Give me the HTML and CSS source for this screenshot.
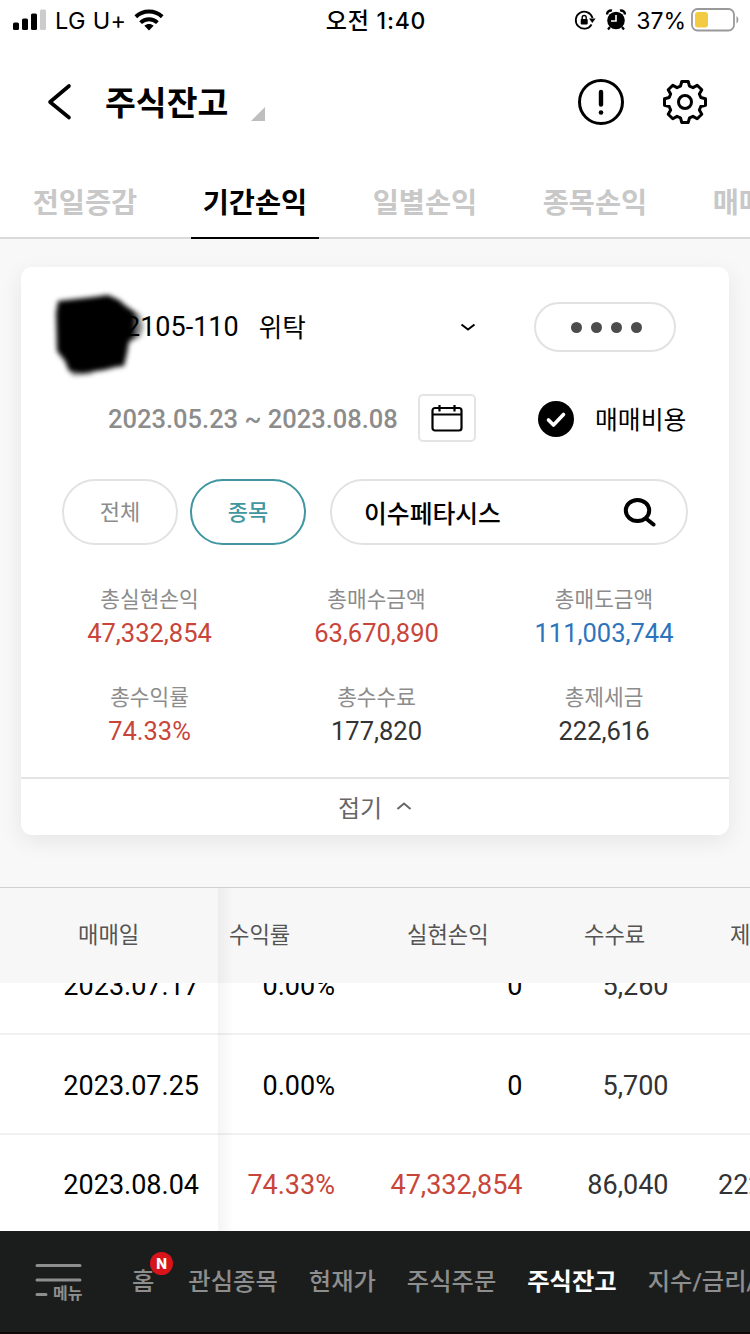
FILE: index.html
```
<!DOCTYPE html>
<html lang="ko">
<head>
    <meta charset="UTF-8">
    <meta name="viewport" content="width=device-width, initial-scale=1.0">
    <title>주식잔고</title>
    <link rel="stylesheet" href="styles.css">
</head>
<body>
    <div class="status-bar">
        <div class="status-left">
            <svg class="signal" width="34" height="22" viewBox="0 0 34 22">
                <rect x="0" y="13.5" width="6" height="7.5" rx="1.5"/>
                <rect x="9" y="9.5" width="6" height="11.5" rx="1.5"/>
                <rect x="18" y="4.5" width="6" height="16.5" rx="1.5"/>
                <rect x="27" y="0.5" width="6" height="20.5" rx="1.5" fill="#ccc"/>
            </svg>
            <span class="carrier">LG U+</span>
            <svg class="wifi" width="30" height="22" viewBox="0 0 30 22" fill="none" stroke="#000" stroke-width="4">
                <path d="M1.8 7.7C9.2.8 20.8.8 28.2 7.7"/>
                <path d="M6.6 13.6C11.4 9.100 18.6 9.100 23.4 13.6"/>
                <path d="M15 21.5l-4.6-4.7c2.6-2.4 6.600-2.4 9.200 0z" fill="#000" stroke="none"/>
            </svg>
        </div>
        <span class="clock">오전 1:40</span>
        <div class="status-right">
            <svg width="22" height="22" viewBox="0 0 22 22" fill="none" stroke="#000" stroke-width="1.8">
                <path d="M17.6 15.5A8.5 8.5 0 1 1 18.5 9"/>
                <path d="M15 9.6h6.6l-3.3 4.4z" fill="#000" stroke="none"/>
                <rect x="6.7" y="10" width="7" height="5.4" rx=".8" fill="#000" stroke="none"/>
                <path d="M8.2 10.2V8.5a2 2 0 0 1 4 0V10.2" stroke-width="1.4"/>
            </svg>
            <svg class="alarm" width="20" height="22" viewBox="0 0 20 22">
                <circle cx="10" cy="11.5" r="8.8"/>
                <path d="M1 5.5C1 2.5 3.5 1 6 1.6M19 5.5C19 2.5 16.5 1 14 1.6" fill="none" stroke="#000" stroke-width="2.4"/>
                <path d="M4 18l-2 2.5M16 18l2 2.5" stroke="#000" stroke-width="2.2"/>
                <path d="M10 6v6H5" fill="none" stroke="#fff" stroke-width="1.6"/>
            </svg>
            <span class="percent">37%</span>
            <svg class="battery" width="48" height="24" viewBox="0 0 48 24">
                <rect x="1" y="1" width="42" height="21.5" rx="5.5" fill="#fff" stroke="#999" stroke-width="1.8"/>
                <rect x="4" y="4" width="13" height="15.5" rx="3" fill="#f3cb42"/>
                <path d="M45.5 8c2.4 1.4 2.4 6 0 7.5z" fill="#999"/>
            </svg>
        </div>
    </div>

    <header class="header">
        <svg class="back" width="26" height="38" viewBox="0 0 26 38" fill="none" stroke="#000" stroke-width="3.6" stroke-linecap="round" stroke-linejoin="round">
            <path d="M22 3L3 19L22 34.5"/>
        </svg>
        <h1>주식잔고</h1>
        <span class="corner"></span>
        <svg class="info" width="48" height="48" viewBox="0 0 48 48" fill="none" stroke="#000" stroke-width="3" stroke-linecap="round">
            <circle cx="24" cy="24" r="21.5"/>
            <path d="M24 14v12.5" stroke-width="4.4"/>
            <circle cx="24" cy="34.5" r="2.3" fill="#000" stroke="none"/>
        </svg>
        <svg class="gear" width="46" height="46" viewBox="0 0 46 46" fill="none" stroke="#000" stroke-width="3" stroke-linejoin="round">
            <path d="M19.8 2.500H26.200L27.500 7.200L31 8.650L35.200 6.200L39.800 10.800L37.350 15L38.800 18.500L43.500 19.800V26.200L38.800 27.500L37.350 31L39.800 35.200L35.200 39.800L31 37.350L27.500 38.800L26.200 43.500H19.800L18.500 38.800L15 37.350L10.800 39.800L6.200 35.200L8.650 31L7.200 27.500L2.500 26.200V19.800L7.200 18.500L8.650 15L6.200 10.800L10.800 6.200L15 8.650L18.500 7.200Z"/>
            <circle cx="23" cy="23" r="6.5"/>
        </svg>
    </header>

    <nav class="tabs">
        <a class="tab">전일증감</a>
        <a class="tab active">기간손익</a>
        <a class="tab">일별손익</a>
        <a class="tab">종목손익</a>
        <a class="tab">매매내역</a>
    </nav>

    <main>
        <section class="card">
            <div class="row account-row">
                <div class="account">
                    <span class="first-digit">3</span>
                    <!-- 계좌번호 가림 -->
                    <svg class="scribble" width="110" height="104" viewBox="0 0 110 104">
                        <defs>
                            <filter id="soft" x="-20%" y="-20%" width="140%" height="140%">
                                <feGaussianBlur stdDeviation="2.8"/>
                            </filter>
                        </defs>
                        <g filter="url(#soft)">
                            <path d="M16 20L52 16L66 14L77 19L84 25L93 31L92 56L87 60L85 72L82 85L74 86L62 89L40 92L27 90L23 80L15 70L14 32Z"/>
                            <path d="M80 26L98 33L101 46L98 56L86 62Z" opacity=".5"/>
                            <path d="M16 72L26 80L30 95L52 93L40 84Z" opacity=".4"/>
                        </g>
                    </svg>
                    <span class="account-number">2105-110</span>
                    <span class="account-type">위탁</span>
                </div>
                <svg class="chevron" width="16" height="10" viewBox="0 0 16 10" fill="none" stroke="#000" stroke-width="2">
                    <path d="M1.5 2.500L8 7.500L14.5 2.500"/>
                </svg>
                <button class="password"><i></i><i></i><i></i><i></i></button>
            </div>

            <div class="row period-row">
                <span class="period">2023.05.23 ~ 2023.08.08</span>
                <button class="calendar">
                    <svg width="32" height="28" viewBox="0 0 32 28" fill="none" stroke="#000" stroke-width="2.2">
                        <rect x="1.5" y="4" width="29" height="22.5" rx="2.5"/>
                        <path d="M1.5 10.500h29M8.500 1v6.500M23.500 1v6.500"/>
                    </svg>
                </button>
                <svg class="check" width="36" height="36" viewBox="0 0 36 36">
                    <circle cx="18" cy="18" r="18"/>
                    <path d="M10.5 19L15.5 24L25.5 13.5" fill="none" stroke="#fff" stroke-width="3.6" stroke-linecap="round" stroke-linejoin="round"/>
                </svg>
                <span class="cost">매매비용</span>
            </div>

            <div class="row filter-row">
                <button class="pill">전체</button>
                <button class="pill selected">종목</button>
                <div class="search">
                    <span>이수페타시스</span>
                    <svg width="34" height="30" viewBox="0 0 34 30" fill="none" stroke="#000" stroke-width="4" stroke-linecap="round">
                        <ellipse cx="14.5" cy="13.5" rx="11.7" ry="10.5"/>
                        <path d="M23 21.5L30.5 27.5"/>
                    </svg>
                </div>
            </div>

            <dl class="summary">
                <div><dt>총실현손익</dt><dd class="up">47,332,854</dd></div>
                <div><dt>총매수금액</dt><dd class="up">63,670,890</dd></div>
                <div><dt>총매도금액</dt><dd class="down">111,003,744</dd></div>
                <div><dt>총수익률</dt><dd class="up">74.33%</dd></div>
                <div><dt>총수수료</dt><dd>177,820</dd></div>
                <div><dt>총제세금</dt><dd>222,616</dd></div>
            </dl>

            <button class="fold">
                접기
                <svg width="16" height="10" viewBox="0 0 16 10" fill="none" stroke="#666" stroke-width="2">
                    <path d="M1.5 8L8 2.5L14.5 8"/>
                </svg>
            </button>
        </section>
    </main>

    <section class="table">
        <div class="table-head">
            <span>매매일</span>
            <span>수익률</span>
            <span>실현손익</span>
            <span>수수료</span>
            <span>제세금</span>
        </div>
        <div class="table-body">
            <div class="table-row">
                <span>2023.07.17</span><span>0.00%</span><span>0</span><span class="fee">5,260</span><span></span>
            </div>
            <div class="table-row">
                <span>2023.07.25</span><span>0.00%</span><span>0</span><span class="fee">5,700</span><span></span>
            </div>
            <div class="table-row">
                <span>2023.08.04</span><span class="up">74.33%</span><span class="up">47,332,854</span><span class="fee">86,040</span><span class="tax">222,616</span>
            </div>
        </div>
        <div class="column-shadow"></div>
    </section>

    <footer class="bottom-nav">
        <a class="menu">
            <svg width="48" height="36" viewBox="0 0 48 36" fill="none" stroke="#8e8e8e" stroke-width="3" stroke-linecap="round">
                <path d="M3 2.500h43M3 17h43M3 31.500h9"/>
            </svg>
            <span>메뉴</span>
        </a>
        <a class="home">홈<b>N</b></a>
        <a>관심종목</a>
        <a>현재가</a>
        <a>주식주문</a>
        <a class="current">주식잔고</a>
        <a>지수/금리/환율</a>
    </footer>
</body>
</html>
```
FILE: styles.css
```
* {
    box-sizing: border-box;
}

body {
    margin: 0;
    width: 750px;
    height: 1334px;
    overflow: hidden;
    display: flex;
    flex-direction: column;
    background: #f8f8f8;
    color: #000;
    font-family: Roboto, "Noto Sans CJK KR", sans-serif;
    white-space: nowrap;
}

button {
    padding: 0;
    background: none;
    font-family: inherit;
}

svg {
    display: block;
    flex: none;
}

.up {
    color: #c8453a;
}

.down {
    color: #2d74bd;
}

/* 상태 표시줄 */
.status-bar {
    height: 40px;
    flex: none;
    display: grid;
    grid-template-columns: 1fr auto 1fr;
    align-items: center;
    padding: 0 11px 0 13px;
    background: #fff;
    font-family: Inter, "Noto Sans CJK KR", sans-serif;
    font-size: 23px;
}

.status-left,
.status-right {
    display: flex;
    align-items: center;
}

.status-right {
    justify-content: flex-end;
}

.carrier {
    width: 70px;
    margin: 1px 9px 0 8px;
    font-size: 23.5px;
    letter-spacing: 0.3px;
}

.clock {
    padding-bottom: 3px;
    font-weight: 500;
    letter-spacing: 0.8px;
}

.alarm {
    margin: 0 10px;
}

.percent {
    padding-top: 1px;
}

.battery {
    margin-left: 5px;
}

/* 상단 제목 */
.header {
    height: 125px;
    flex: none;
    display: flex;
    align-items: center;
    padding: 0 42px 2px 47px;
    background: #fff;
}

.header h1 {
    margin: 0 0 3px 32px;
    font-size: 33.5px;
    font-weight: 700;
}

.corner {
    margin: 24px auto 0 23px;
    border-left: 14px solid transparent;
    border-bottom: 14px solid #bebebe;
}

.gear {
    margin-left: 37px;
}

/* 탭 */
.tabs {
    height: 74px;
    flex: none;
    display: flex;
    gap: 42px;
    padding-left: 21px;
    border-bottom: 2px solid #dadada;
    background: #fff;
    overflow-x: clip;
}

.tab {
    flex: none;
    width: 128px;
    height: 74px;
    line-height: 78px;
    text-align: center;
    color: #c8c8c8;
    font-size: 28.4px;
    font-weight: 700;
}

.tab.active {
    color: #000;
    border-bottom: 2px solid #000;
}

/* 요약 카드 */
main {
    height: 648px;
    flex: none;
    padding: 28px 21px 0;
}

.card {
    height: 568px;
    display: flex;
    flex-direction: column;
    border-radius: 11px;
    background: #fff;
    box-shadow: 0 6px 22px rgba(0, 0, 0, 0.08);
}

.row {
    display: flex;
    align-items: center;
}

.account-row {
    height: 50px;
    margin-top: 35px;
    padding: 0 53px 0 43px;
}

.account {
    position: relative;
    display: flex;
    align-items: center;
    font-size: 27px;
}

.first-digit {
    width: 61px;
}

.account-number {
    position: relative;
}

.account-type {
    margin-left: 20px;
    padding-bottom: 3px;
    font-size: 25.6px;
}

.scribble {
    position: absolute;
    left: -22px;
    top: -26px;
}

.chevron {
    margin-left: auto;
}

.password {
    width: 142px;
    height: 50px;
    margin-left: 58px;
    padding-left: 2px;
    display: flex;
    align-items: center;
    justify-content: center;
    gap: 9px;
    border: 2px solid #e2e2e2;
    border-radius: 25px;
}

.password i {
    width: 11px;
    height: 11px;
    border-radius: 50%;
    background: #4c4c4c;
}

.period-row {
    height: 48px;
    margin-top: 42px;
    padding-left: 87px;
}

.period {
    width: 310px;
    padding-top: 1px;
    color: #8c8c8c;
    font-size: 25.5px;
    font-weight: 500;
}

.calendar {
    width: 58px;
    height: 48px;
    display: flex;
    align-items: center;
    justify-content: center;
    border: 2px solid #e4e4e4;
    border-radius: 5px;
}

.check {
    margin: 1px 0 0 62px;
}

.cost {
    margin-left: 21px;
    padding-bottom: 1px;
    font-size: 24.8px;
}

.filter-row {
    height: 66px;
    margin-top: 37px;
    padding-left: 41px;
}

.pill {
    width: 116px;
    height: 66px;
    margin-right: 12px;
    padding-bottom: 4px;
    border: 2px solid #e2e2e2;
    border-radius: 38px;
    color: #8c8c8c;
    font-size: 22px;
}

.pill.selected {
    margin-right: 24px;
    border-color: #4096a1;
    color: #4096a1;
    font-weight: 500;
}

.search {
    width: 358px;
    height: 66px;
    display: flex;
    align-items: center;
    justify-content: space-between;
    padding: 0 29px 0 32px;
    border: 2px solid #e2e2e2;
    border-radius: 33px;
    font-size: 24.8px;
    font-weight: 500;
}

.summary {
    height: 232px;
    margin: 0;
    padding: 39px 0 0 15px;
    display: grid;
    grid-template-columns: 227px 227px 228px;
    grid-template-rows: 98px 98px;
    text-align: center;
}

.summary dt {
    height: 32px;
    line-height: 32px;
    color: #8c8c8c;
    font-size: 21.4px;
}

.summary dd {
    margin: 0;
    line-height: 35px;
    font-size: 25.5px;
}

.summary dd:not([class]) {
    color: #333;
}

.fold {
    flex: 1;
    display: flex;
    align-items: center;
    justify-content: center;
    gap: 14px;
    padding-bottom: 2px;
    border: 0;
    border-top: 2px solid #e4e4e4;
    color: #666;
    font-size: 24px;
}

/* 매매 내역 */
.table {
    position: relative;
    height: 344px;
    flex: none;
    border-top: 1px solid #d0d0d0;
    overflow: hidden;
}

.table-head {
    height: 95px;
    display: grid;
    grid-template-columns: 229px 178px 177px 146px 100px;
    align-items: center;
    padding-bottom: 6px;
    background: #f7f7f7;
    color: #555;
    font-size: 22.2px;
}

.table-head span:first-child {
    padding-left: 78px;
}

.table-body {
    height: 248px;
    display: flex;
    flex-direction: column;
    justify-content: flex-end;
    overflow: hidden;
    background: #fff;
}

.table-row {
    height: 100px;
    flex: none;
    display: grid;
    grid-template-columns: 199px 136px 187.5px 146px 130px;
    align-items: center;
    padding-top: 3px;
    border-bottom: 2px solid #f1f1f1;
    font-size: 27px;
    text-align: right;
}

.table-row:last-child {
    height: 96px;
    padding-top: 4px;
    border-bottom: 0;
}

.table-row .fee,
.table-row .tax {
    color: #333;
}

.table-row .tax {
    padding-left: 49.5px;
    text-align: left;
}

/* 고정 열 그림자 */
.column-shadow {
    position: absolute;
    left: 218px;
    top: 0;
    bottom: 0;
    width: 16px;
    background: linear-gradient(to right, rgba(0, 0, 0, 0.045), rgba(0, 0, 0, 0));
}

/* 하단 메뉴 */
.bottom-nav {
    height: 103px;
    flex: none;
    display: flex;
    align-items: center;
    gap: 31px;
    padding: 0 0 5px 34px;
    border-bottom: 2px solid #110709;
    background: #1b1d1c;
    color: #8e8e8e;
    font-size: 24.3px;
    font-weight: 500;
    overflow-x: clip;
}

.menu {
    position: relative;
    margin: 4px 19px 0 0;
}

.menu span {
    position: absolute;
    left: 19px;
    top: 20px;
    font-size: 16px;
    line-height: 22px;
    font-weight: 700;
}

.home {
    position: relative;
    margin-right: 3px;
}

.home b {
    position: absolute;
    left: 18px;
    top: -10px;
    width: 23px;
    height: 23px;
    border-radius: 50%;
    background: #d7141a;
    color: #fff;
    font: 800 14px/23px Inter, sans-serif;
    text-align: center;
}

.current {
    color: #fff;
    font-weight: 700;
}
```
